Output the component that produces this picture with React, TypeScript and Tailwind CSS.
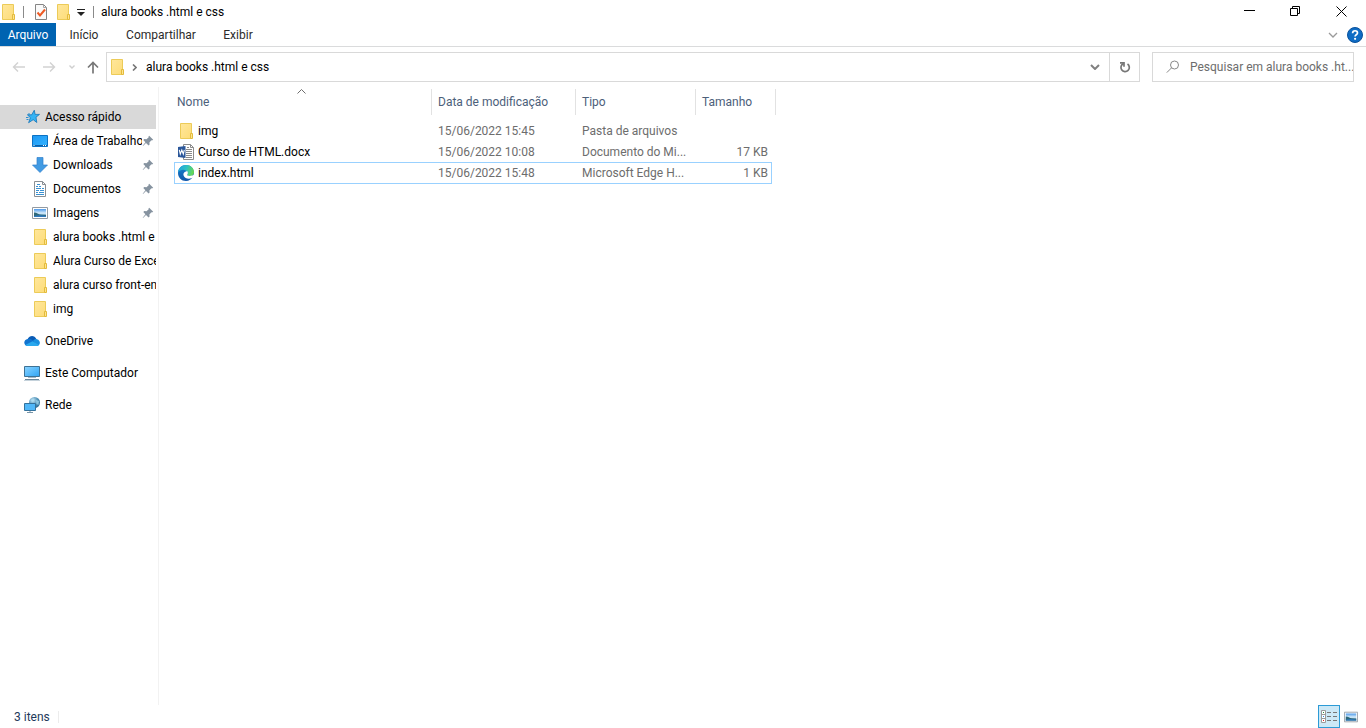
import React from "react";

type IconProps = { className?: string };

function Folder({ className = "" }: IconProps) {
  return (
    <svg className={`size-4 shrink-0 ${className}`} viewBox="0 0 16 16" aria-hidden="true">
      <defs>
        <linearGradient id="folderFill" x1="0" y1="0" x2="1" y2="1">
          <stop offset="0" stopColor="#ffe79c" />
          <stop offset="1" stopColor="#fddc78" />
        </linearGradient>
      </defs>
      <path d="M2.500.5h11v15h-11z" fill="url(#folderFill)" stroke="#eccb58" />
      <path d="M12.500 15.500v-5h2v5z" fill="#ffe48f" stroke="#e3bb3c" />
    </svg>
  );
}

function PropertiesIcon() {
  return (
    <svg className="size-4" viewBox="0 0 16 16" aria-hidden="true">
      <path d="M2.500.5h8l3 3v12h-11z" fill="#fafafa" stroke="#858585" />
      <path d="M10.500.5v3h3" fill="none" stroke="#a5a5a5" />
      <path d="M4.500 8.500l2.500 3 5-6" fill="none" stroke="#ee5a24" strokeWidth="2" />
    </svg>
  );
}

function QuickStar() {
  return (
    <svg className="size-4 shrink-0" viewBox="0 0 16 16" aria-hidden="true">
      <path
        d="M10.300 1.200l.8 4.200h4.400l-3.500 2.800.8 5.300-3.600-2.800-4.600 3 1.800-5-3-2.900h4.300z"
        fill="#35b3f4"
        stroke="#1474b8"
        strokeWidth=".8"
      />
      <path d="M2 8.500h2.500M2.500 10.500h2M4 5h2" stroke="#2c8fd0" />
    </svg>
  );
}

function DesktopIcon() {
  return (
    <svg className="size-4 shrink-0" viewBox="0 0 16 16" aria-hidden="true">
      <defs>
        <linearGradient id="desk" x1="0" y1="0" x2="1" y2="1">
          <stop offset="0" stopColor="#1c97f3" />
          <stop offset="1" stopColor="#35b4ff" />
        </linearGradient>
      </defs>
      <path d="M.5 2.500h15v11H.5z" fill="url(#desk)" stroke="#0b72c4" />
      <path d="M1 12.500h14" stroke="#0c5fa6" />
      <path d="M1.500 12.500h1M11 12.500h1M13 12.500h1" stroke="#fff" />
    </svg>
  );
}

function DownloadIcon() {
  return (
    <svg className="size-4 shrink-0" viewBox="0 0 16 16" aria-hidden="true">
      <path d="M5 .5h6v7.500h4.500L8 15.500.5 8H5z" fill="#429be3" stroke="#2f80cc" strokeWidth=".7" />
    </svg>
  );
}

function DocumentIcon() {
  return (
    <svg className="size-4 shrink-0" viewBox="0 0 16 16" aria-hidden="true">
      <path d="M2.500.5h8l3 3v12h-11z" fill="#fff" stroke="#8a8f94" />
      <path d="M10.500.5v3h3" fill="none" stroke="#8a8f94" />
      <path d="M5 3.500h3M4 5.500h2M7 5.500h2M4 7.500h5M10 7.500h2M4 9.500h3M8 9.500h4M4 11.500h2M7 11.500h5M4 13.500h8" fill="none" stroke="#3b91d1" />
    </svg>
  );
}

function PictureIcon({ className = "" }: IconProps) {
  return (
    <svg className={`shrink-0 ${className}`} viewBox="0 0 16 16" aria-hidden="true">
      <defs>
        <linearGradient id="sky" x1="0" y1="0" x2="0" y2="1">
          <stop offset="0" stopColor="#4b98ea" />
          <stop offset=".5" stopColor="#d4ebfa" />
          <stop offset="1" stopColor="#81b7e2" />
        </linearGradient>
      </defs>
      <path d="M.5 2.500h15v11H.5z" fill="#fff" stroke="#929aa2" />
      <path d="M2 4h12v8H2z" fill="url(#sky)" />
      <path d="M2 7.500c3 .2 4 1.800 7 2l5 .3V12H2z" fill="#2e6878" />
      <path d="M2 11c4-1 8-1 12 0v1H2z" fill="#2e79bd" />
    </svg>
  );
}

function OneDriveIcon() {
  return (
    <svg className="size-4 shrink-0" viewBox="0 0 16 16" aria-hidden="true">
      <path d="M3.700 6C5.400 2.300 10.600 2 12.300 6.100L9 10z" fill="#0a5bb5" />
      <path d="M3.700 5.900C7 5.200 8.500 7.500 12 9.500L4 13C-.8 13-1 6.500 3.700 5.900z" fill="#1173cf" />
      <path d="M9 8c1.200-1.800 3-2.200 4-1.800 3.800.9 3.800 6.300.2 6.800z" fill="#1a90e0" />
      <path d="M1.300 12l7.200-3.800 6.400 3.800c-.5.7-1.200 1-2 1H3.700c-1 0-1.800-.3-2.400-1z" fill="#29a8ee" />
    </svg>
  );
}

function ComputerIcon() {
  return (
    <svg className="size-4 shrink-0" viewBox="0 0 16 16" aria-hidden="true">
      <defs>
        <linearGradient id="screen" x1="0" y1="0" x2="1" y2="1">
          <stop offset="0" stopColor="#8bd3ff" />
          <stop offset=".5" stopColor="#5bbcfb" />
          <stop offset="1" stopColor="#30a4f2" />
        </linearGradient>
      </defs>
      <path d="M.5 1.500h15v10H.5z" fill="url(#screen)" stroke="#3e7295" />
      <path d="M4 12.500h8" stroke="#a2b9c8" />
      <path d="M1 14.500h14" stroke="#69879b" />
      <path d="M0 15.500h16" stroke="#c5d2db" />
    </svg>
  );
}

function NetworkIcon() {
  return (
    <svg className="size-4 shrink-0" viewBox="0 0 16 16" aria-hidden="true">
      <defs>
        <radialGradient id="globe" cx=".35" cy=".3" r=".8">
          <stop offset="0" stopColor="#c7e6f5" />
          <stop offset=".5" stopColor="#5798bd" />
          <stop offset="1" stopColor="#25658e" />
        </radialGradient>
      </defs>
      <circle cx="10.500" cy="5.500" r="5.500" fill="url(#globe)" />
      <path d="M6.500 3.500l3-2 1 1.500-2 2zM12 3l3 1-.5 4-2-1z" fill="#a6dcf1" opacity=".7" />
      <path d="M.5 6.500h11v7H.5z" fill="#50b7f8" stroke="#34729c" />
      <path d="M6 14v1.500M3 15.500h6" stroke="#7895a8" />
    </svg>
  );
}

function WordIcon() {
  return (
    <svg className="size-4 shrink-0" viewBox="0 0 16 16" aria-hidden="true">
      <path d="M5.500.5h7l3 3v12h-10z" fill="#fff" stroke="#8b8b8b" />
      <path d="M12.500.5v3h3" fill="none" stroke="#8b8b8b" />
      <path d="M9 3.500h2M8 5.500h6M8 7.500h6M8 9.500h6M8 11.500h6M8 13.500h6" stroke="#8a8a8a" />
      <path d="M0 3l7.500-1v12L0 13z" fill="#2b579a" />
      <path d="M1.300 5.800l1 4.200 1.500-4 1.500 4 1-4.200" fill="none" stroke="#fff" strokeWidth="1.100" />
    </svg>
  );
}

function EdgeIcon() {
  return (
    <svg className="size-4 shrink-0" viewBox="0 0 16 16" aria-hidden="true">
      <defs>
        <linearGradient id="edgeTop" x1="0" y1=".3" x2="1" y2=".5">
          <stop offset="0" stopColor="#1fa5de" />
          <stop offset=".5" stopColor="#2cc1c5" />
          <stop offset="1" stopColor="#6bd94d" />
        </linearGradient>
        <linearGradient id="edgeLow" x1="0" y1="0" x2="0" y2="1">
          <stop offset="0" stopColor="#1584d2" />
          <stop offset="1" stopColor="#1055a8" />
        </linearGradient>
      </defs>
      <path d="M0 8C0 3.500 3.500 0 8 0s8 3.500 8 7.500c0 1-.5 3.500-1 4.300C13.500 14.500 11 16 8 16c-4.500 0-8-3.500-8-8z" fill="url(#edgeLow)" />
      <path d="M0 7.500C.5 3 4 0 8.200 0 13 0 16 3.600 16 7.200c0 2.300-1.800 4-4 4-2 0-3-.7-2.800-1.200.9-1 .9-2 .4-2.900C8.500 4.300 2.500 3.500 0 7.500z" fill="url(#edgeTop)" />
      <path d="M9.400 6.200c-3 0-4.600 2.200-3.700 4.500 1.200 3 6 4.200 10.300 1.300V9.500c-1.500 1.800-7 2-6.800.3.900-1 .8-2.600.2-3.600z" fill="#fff" />
    </svg>
  );
}

function Pin() {
  return (
    <svg className="mr-[2px] size-3 shrink-0" viewBox="0 0 12 12" aria-hidden="true">
      <path d="M7.200.8l4 4-1.200.7-.6-.2-2 2.200.2 2-1 1L4 8 1 11l-.3-.3L3.400 7.300 1.300 5l1-.9 2.200.1 2.200-1.900-.2-.8z" fill="#8693a0" />
    </svg>
  );
}

type Place = { label: string; icon: React.ReactNode; pinned?: boolean };

const quick: Place[] = [
  { label: "Área de Trabalho", icon: <DesktopIcon />, pinned: true },
  { label: "Downloads", icon: <DownloadIcon />, pinned: true },
  { label: "Documentos", icon: <DocumentIcon />, pinned: true },
  { label: "Imagens", icon: <PictureIcon className="size-4" />, pinned: true },
  { label: "alura books .html e", icon: <Folder /> },
  { label: "Alura Curso de Exce", icon: <Folder /> },
  { label: "alura curso front-en", icon: <Folder /> },
  { label: "img", icon: <Folder /> },
];

const roots: Place[] = [
  { label: "OneDrive", icon: <OneDriveIcon /> },
  { label: "Este Computador", icon: <ComputerIcon /> },
  { label: "Rede", icon: <NetworkIcon /> },
];

const files = [
  { name: "img", icon: <Folder />, date: "15/06/2022 15:45", type: "Pasta de arquivos", size: "", focused: false },
  { name: "Curso de HTML.docx", icon: <WordIcon />, date: "15/06/2022 10:08", type: "Documento do Mi...", size: "17 KB", focused: false },
  { name: "index.html", icon: <EdgeIcon />, date: "15/06/2022 15:48", type: "Microsoft Edge H...", size: "1 KB", focused: true },
];

function TitleBar() {
  return (
    <header className="flex h-[23px] items-center">
      <Folder />
      <span className="ml-[7px] h-3 w-px bg-[#8a8a8a]" />
      <button type="button" aria-label="Propriedades" className="ml-[9px]">
        <PropertiesIcon />
      </button>
      <button type="button" aria-label="Nova pasta" className="ml-[6px]">
        <Folder />
      </button>
      <button type="button" aria-label="Personalizar" className="ml-[6px]">
        <svg className="h-2 w-2" viewBox="0 0 8 8" aria-hidden="true">
          <path d="M0 1.500h8" stroke="#222" />
          <path d="M0 4h8L4 8z" fill="#222" />
        </svg>
      </button>
      <span className="ml-2 h-3 w-px bg-[#8a8a8a]" />
      <h1 className="ml-[7px] flex-1 text-black">alura books .html e css</h1>
      <div className="flex h-full pr-[2px]">
        <button type="button" aria-label="Minimizar" className="flex w-[46px] items-center justify-center">
          <svg className="size-[11px]" viewBox="0 0 11 11" aria-hidden="true">
            <path d="M0 4.500h11" stroke="#000" />
          </svg>
        </button>
        <button type="button" aria-label="Restaurar" className="flex w-[46px] items-center justify-center">
          <svg className="size-[11px]" viewBox="0 0 11 11" fill="none" stroke="#000" aria-hidden="true">
            <path d="M.5 2.500h7v7h-7zM2.500 2.500v-2h7v7h-2" />
          </svg>
        </button>
        <button type="button" aria-label="Fechar" className="flex w-[46px] items-center justify-center">
          <svg className="size-[11px]" viewBox="0 0 11 11" stroke="#000" aria-hidden="true">
            <path d="M.5.5l10 10M10.500.5l-10 10" />
          </svg>
        </button>
      </div>
    </header>
  );
}

function Ribbon() {
  return (
    <nav className="flex h-6 items-stretch border-b border-[#dadbdc] text-[#2b2b2b]">
      <button type="button" className="w-14 bg-[#0063b1] text-white">Arquivo</button>
      <button type="button" className="w-14">Início</button>
      <button type="button" className="w-[98px]">Compartilhar</button>
      <button type="button" className="w-14">Exibir</button>
      <div className="ml-auto flex items-center gap-[9px] pr-[3px]">
        <button type="button" aria-label="Minimizar a faixa de opções">
          <svg className="h-[6px] w-[10px]" viewBox="0 0 10 6" fill="none" aria-hidden="true">
            <path d="M1 1l4 4 4-4" stroke="#9a9a9a" strokeWidth="1.300" />
          </svg>
        </button>
        <button type="button" aria-label="Ajuda">
          <svg className="size-4" viewBox="0 0 16 16" aria-hidden="true">
            <circle cx="8" cy="8" r="7.500" fill="#0f6cc4" stroke="#0a529c" />
            <path d="M5.600 6.200C5.600 3 10.500 3 10.500 5.900c0 1.800-2.400 1.800-2.400 3.500" fill="none" stroke="#fff" strokeWidth="1.700" />
            <circle cx="8.100" cy="11.800" r="1.100" fill="#fff" />
          </svg>
        </button>
      </div>
    </nav>
  );
}

function AddressRow() {
  return (
    <div className="flex h-10 items-center pr-3">
      <div className="flex w-[106px] items-center pl-3">
        <button type="button" aria-label="Voltar">
          <svg className="h-3 w-[14px]" viewBox="0 0 14 12" fill="none" stroke="#d2d2d2" strokeWidth="1.400" aria-hidden="true">
            <path d="M13 6H1.500M6 1.500L1.500 6 6 10.500" />
          </svg>
        </button>
        <button type="button" aria-label="Avançar" className="ml-4">
          <svg className="h-3 w-[14px]" viewBox="0 0 14 12" fill="none" stroke="#d2d2d2" strokeWidth="1.400" aria-hidden="true">
            <path d="M1 6h11.500M8 1.500L12.500 6 8 10.500" />
          </svg>
        </button>
        <button type="button" aria-label="Locais recentes" className="ml-3">
          <svg className="h-1 w-2" viewBox="0 0 8 4" fill="none" stroke="#cfcfcf" strokeWidth="1.400" aria-hidden="true">
            <path d="M1.500 .5l2.500 2.500 2.500-2.500" />
          </svg>
        </button>
        <button type="button" aria-label="Acima" className="ml-[11px]">
          <svg className="h-[14px] w-3" viewBox="0 0 12 14" fill="none" stroke="#777" strokeWidth="1.700" aria-hidden="true">
            <path d="M6 13.500V2.500M1 7.500l5-5 5 5" />
          </svg>
        </button>
      </div>
      <div className="flex h-[30px] flex-1 items-center border border-[#d9d9d9]">
        <Folder className="ml-[2px]" />
        <svg className="ml-[7px] h-[7px] w-[5px]" viewBox="0 0 5 7" fill="none" stroke="#777" strokeWidth="1.600" aria-hidden="true">
          <path d="M1 .5l3 3-3 3" />
        </svg>
        <button type="button" className="ml-[9px] text-black">alura books .html e css</button>
        <button type="button" aria-label="Locais anteriores" className="ml-auto flex h-full w-[29px] items-center justify-center">
          <svg className="h-[6px] w-[10px]" viewBox="0 0 10 6" fill="none" stroke="#808080" strokeWidth="2" aria-hidden="true">
            <path d="M1 1l4 4 4-4" />
          </svg>
        </button>
        <button type="button" aria-label="Atualizar" className="flex h-full w-[30px] items-center justify-center border-l border-[#d9d9d9]">
          <svg className="size-3" viewBox="0 0 12 12" fill="none" stroke="#777" strokeWidth="1.700" aria-hidden="true">
            <path d="M8.500 3A4.200 4.200 0 1 1 4.500 2.600" />
            <path d="M1 1.800h4v4" />
          </svg>
        </button>
      </div>
      <label className="ml-3 flex h-[30px] w-[202px] items-center border border-[#d9d9d9]">
        <svg className="ml-[13px] size-[14px] shrink-0" viewBox="0 0 14 14" fill="none" stroke="#888" aria-hidden="true">
          <circle cx="8.500" cy="5" r="4" />
          <path d="M5.600 7.800L.8 12.600" />
        </svg>
        <input
          type="text"
          aria-label="Pesquisar"
          placeholder="Pesquisar em alura books .ht..."
          className="ml-[10px] w-full min-w-0 bg-transparent outline-none placeholder:text-[#6d6d6d]"
        />
      </label>
    </div>
  );
}

function Sidebar() {
  return (
    <aside className="w-[159px] shrink-0 border-r border-[#f2f2f2] pt-[18px] pr-[2px] text-black">
      <a href="#acesso" className="flex h-6 items-center gap-[5px] bg-[#d9d9d9] pl-6">
        <QuickStar />
        Acesso rápido
      </a>
      <ul>
        {quick.map((p) => (
          <li key={p.label}>
            <a href="#pasta" className="flex h-6 items-center pl-8">
              {p.icon}
              <span className="ml-[5px] min-w-0 flex-1 overflow-hidden whitespace-nowrap">{p.label}</span>
              {p.pinned && <Pin />}
            </a>
          </li>
        ))}
      </ul>
      <ul className="mt-2 flex flex-col gap-2">
        {roots.map((p) => (
          <li key={p.label}>
            <a href="#local" className="flex h-6 items-center gap-[5px] pl-6">
              {p.icon}
              {p.label}
            </a>
          </li>
        ))}
      </ul>
    </aside>
  );
}

function FileTable() {
  const head = "h-[31px] p-0 text-left align-top font-normal";
  const label = "flex h-[26px] w-full items-center border-r border-[#e2e2e2] text-[#4c607a]";
  return (
    <main className="min-w-0 flex-1 pt-[2px] pl-[15px]">
      <table className="w-[602px] table-fixed border-separate border-spacing-0">
        <colgroup>
          <col className="w-[258px]" />
          <col className="w-[144px]" />
          <col className="w-[120px]" />
          <col className="w-[76px]" />
          <col className="w-1" />
        </colgroup>
        <thead>
          <tr>
            <th className={head}>
              <button type="button" className={`relative pl-[3px] ${label}`}>
                Nome
                <svg className="absolute top-0 left-[123px] h-[5px] w-[9px]" viewBox="0 0 9 5" fill="none" stroke="#6d6d6d" aria-hidden="true">
                  <path d="M.5 4.500l4-4 4 4" />
                </svg>
              </button>
            </th>
            <th className={head}><button type="button" className={`pl-[6px] ${label}`}>Data de modificação</button></th>
            <th className={head}><button type="button" className={`pl-[6px] ${label}`}>Tipo</button></th>
            <th className={head} colSpan={2}><button type="button" className={`pl-[6px] ${label}`}>Tamanho</button></th>
          </tr>
        </thead>
        <tbody>
          {files.map((f) => {
            const edge = f.focused ? "h-[22px] border-y border-[#99d1ff]" : "h-[21px] border-y border-transparent";
            return (
              <tr key={f.name} className="text-[#6d6d6d]">
                <td className={`p-0 text-black ${edge} ${f.focused ? "border-l" : ""}`}>
                  <div className={`flex items-center gap-1 ${f.focused ? "pl-[3px]" : "pl-1"}`}>
                    {f.icon}
                    {f.name}
                  </div>
                </td>
                <td className={`p-0 pl-[6px] ${edge}`}>{f.date}</td>
                <td className={`p-0 pl-[6px] whitespace-nowrap ${edge}`}>{f.type}</td>
                <td className={`p-0 text-right ${edge} ${f.focused ? "border-r pr-[3px]" : "pr-1"}`}>{f.size}</td>
                <td className="p-0" />
              </tr>
            );
          })}
        </tbody>
      </table>
    </main>
  );
}

function StatusBar() {
  return (
    <footer className="flex h-[23px] items-center pr-2 text-[#1e395b]">
      <span className="pl-[14px]">3 itens</span>
      <span className="ml-2 h-3 w-px bg-[#ececec]" />
      <button type="button" aria-label="Detalhes" className="ml-auto flex h-[23px] w-[22px] items-center justify-center border border-[#2c9bd6] bg-[#cce8f6]">
        <svg className="h-[14px] w-[16px] shrink-0" viewBox="0 0 16 14" fill="none" aria-hidden="true">
          <path d="M.5.500h4v12h-4zM.5 4.500h4M.5 8.500h4" fill="#fff" stroke="#9a9a9a" />
          <path d="M2 2.500h1" stroke="#2e8b3d" />
          <path d="M2 6.500h1" stroke="#2f86e0" />
          <path d="M2 10.500h1" stroke="#e02020" />
          <path d="M6 2.500h4M12 2.500h4M6 6.500h4M12 6.500h4M6 10.500h4M12 10.500h4" stroke="#777" />
        </svg>
      </button>
      <button type="button" aria-label="Ícones grandes" className="ml-1">
        <PictureIcon className="h-[14px] w-[14px]" />
      </button>
    </footer>
  );
}

export default function App() {
  return (
    <div className="flex min-h-screen flex-col overflow-hidden bg-white font-[Roboto,'Noto_Sans',sans-serif] text-[12px] leading-4">
      <TitleBar />
      <Ribbon />
      <AddressRow />
      <div className="flex flex-1">
        <Sidebar />
        <FileTable />
      </div>
      <StatusBar />
    </div>
  );
}
